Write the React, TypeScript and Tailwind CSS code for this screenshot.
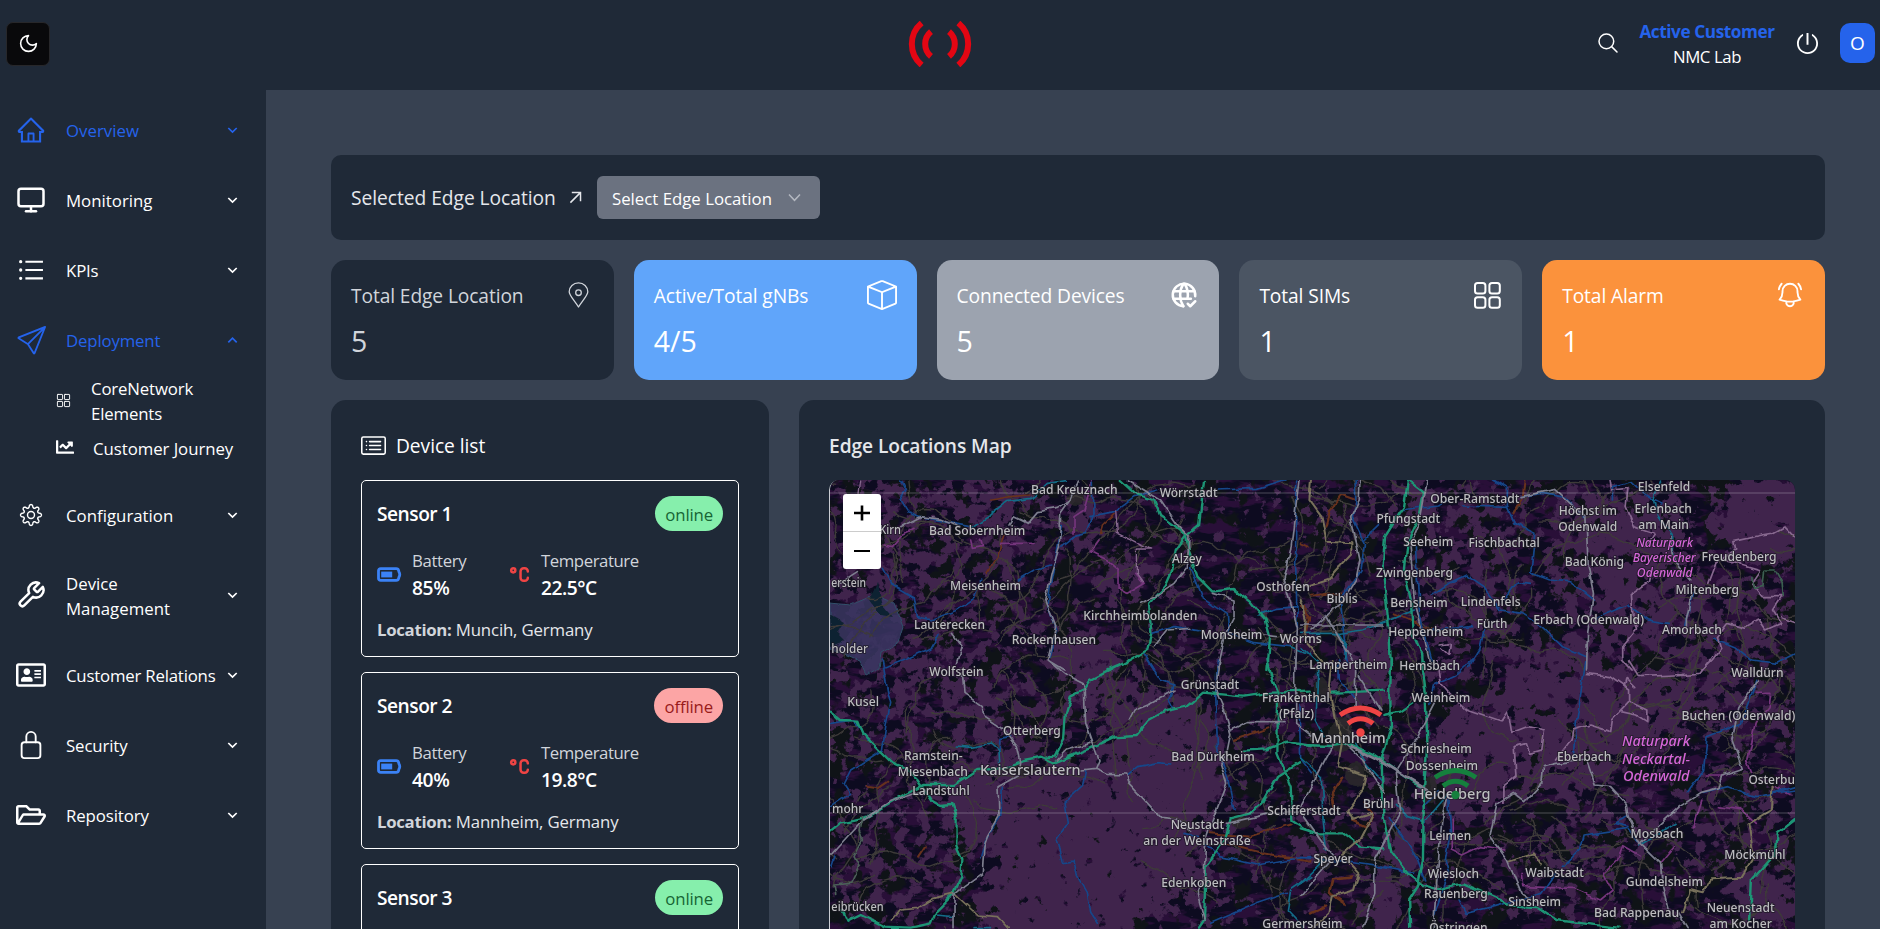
import React from "react";
import { AiOutlineHome, AiOutlineUnorderedList, AiOutlinePoweroff } from "react-icons/ai";
import { FiMonitor } from "react-icons/fi";
import { BsSend, BsBox, BsCardList } from "react-icons/bs";
import { LuWrench } from "react-icons/lu";
import { FaRegAddressCard, FaRegFolderOpen, FaChartLine } from "react-icons/fa";
import { IoLockClosedOutline, IoGridOutline, IoSearchOutline } from "react-icons/io5";
import { TbWorldCheck, TbTemperatureCelsius } from "react-icons/tb";
import { HiOutlineBellAlert } from "react-icons/hi2";

/* ---------- map ---------- */

type Sheet = "nw" | "ne" | "sw" | "se";

const SHEETS: Record<Sheet, { x: number; y: number; sx: number; sy: number }> = {
  nw: { x: 789.7, y: 400, sx: 1 / 3, sy: 1 / 3 },
  ne: { x: 1299.7, y: 400, sx: 540 / 1568, sy: 1 / 3 },
  sw: { x: 789.7, y: 660, sx: 1 / 3, sy: 1 / 3 },
  se: { x: 1299.7, y: 660, sx: 540 / 1568, sy: 1 / 3 },
};

const GREEN = "#1f9474";
const BLUE = "#154689";
const TEAL = "#126a86";
const RAIL = "#7d7e8e";
const LILAC = "#86678e";
const KHAKI = "#77705a";
const MAGENTA = "#74357b";
const ORANGE = "#66301f";

const ROADS: [Sheet, string, number, string[]][] = [
  ["nw", ORANGE, 5, ["M600 300 L660 290 L720 285", "M640 400 L620 470 L585 520", "M970 340 L935 375 L930 400", "M1540 620 L1555 660 L1540 700"]],
  ["ne", ORANGE, 6, ["M72 380 L85 330 L120 285 L160 300", "M650 240 L645 290 L618 340", "M0 430 L20 440", "M30 590 L120 580", "M270 640 L380 690", "M0 620 L25 650 L15 700"]],
  ["sw", ORANGE, 6, ["M230 380 L260 385 L290 365", "M1330 240 L1430 205", "M1260 520 L1380 530 L1500 490", "M1290 550 L1420 580 L1560 605", "M385 590 L405 560"]],
  ["se", ORANGE, 8, ["M120 350 L90 400 L100 450", "M150 480 L190 500 L210 460 L185 430", "M150 650 L95 655 L85 700 L130 730", "M30 760 L70 740"]],
  ["nw", MAGENTA, 5, ["M905 240 L880 330 L850 350 L850 400", "M540 420 L545 445 L575 440 L570 415", "M630 430 L730 430", "M280 435 L305 440 L340 400 L370 385", "M925 420 L900 455 L950 480 L985 510 L985 565 L1010 580 L1060 550 L1035 520"]],
  ["se", MAGENTA, 5, ["M440 480 L440 570 L470 585 L520 560 L590 570", "M640 640 L645 680 L790 685 L870 720 L905 690 L880 640 L920 600 L935 560 L985 590", "M1320 100 L1365 100 L1360 140 L1320 190 L1295 300 L1310 340", "M1370 380 L1420 400", "M1210 440 L1280 450 L1320 490", "M1180 345 L1230 345", "M1140 500 L1165 420", "M1045 610 L1085 560"]],
  ["nw", BLUE, 5, ["M330 240 L345 275 L328 300 L350 335 L390 350 L460 365 L540 380", "M905 250 L907 340 L885 400 L850 410 L812 440", "M895 350 L970 335 L1030 290 L1100 270", "M1280 270 L1400 265 L1480 240", "M680 540 L730 510 L780 495", "M275 505 L300 550 L370 590 L380 650 L420 660 L500 630 L550 595 L570 540", "M445 700 L420 745 L340 780 L280 805", "M1200 500 L1235 590 L1310 640 L1315 700 L1390 728 L1500 740", "M1085 700 L1150 680 L1225 692", "M1060 760 L1090 810", "M1410 640 L1460 625 L1520 620", "M1515 240 L1515 500 L1520 680", "M812 380 L800 450 L778 560 L772 620 L798 690 L775 770"]],
  ["ne", BLUE, 5, ["M158 240 L160 310 L150 350 L185 430 L175 510 L115 600 L125 700 L135 790", "M180 420 L230 370", "M290 330 L400 315 L430 300", "M640 290 L700 280 L770 292 L825 350", "M560 240 L600 265 L600 320 L620 370 L680 400 L668 520 L720 540 L780 545 L850 600", "M470 318 L600 322", "M380 585 L430 550 L480 525 L530 560 L580 630 L640 640 L700 680 L760 740 L830 770", "M590 600 L630 545 L668 550", "M860 655 L950 615 L1010 660 L1070 670", "M1200 715 L1260 740 L1310 780 L1380 790 L1437 760", "M380 690 L500 680", "M535 680 L520 750 L490 800", "M1138 580 L1115 680", "M333 440 L345 640 L380 780", "M905 300 L905 260 L960 245 L1000 285 L1050 310"]],
  ["sw", BLUE, 5, ["M275 0 L290 90 L300 130 L285 200 L275 270 L180 330 L160 370 L180 400 L120 440", "M120 190 L190 180 L230 240", "M625 275 L628 235 L660 230", "M885 330 L875 380 L820 430 L830 490 L797 540 L815 605 L850 600 L860 650 L890 700 L900 760 L920 790", "M1010 345 L1040 320 L1100 308 L1140 312", "M1070 0 L1110 60 L1150 75 L1135 120 L1150 150", "M1280 0 L1275 100 L1280 260 L1310 350 L1330 450", "M1245 550 L1290 590 L1400 615 L1480 600 L1560 590", "M1260 790 L1400 730 L1490 700", "M635 380 L630 470 L585 540 L568 600", "M1525 130 L1530 300 L1560 340", "M120 620 L130 590", "M1220 530 L1180 520"]],
  ["se", BLUE, 5, ["M0 592 L100 600 L240 622 L330 640", "M500 0 L450 45 L385 75 L378 130", "M828 0 L800 190 L795 290", "M1325 60 L1280 190 L1180 230 L1170 330 L1120 400", "M1165 400 L1240 380 L1320 410 L1437 390", "M260 470 L340 600 L360 660", "M760 620 L810 570 L820 525 L950 505 L980 545", "M460 720 L480 760 L560 740 L700 700 L740 640", "M110 0 L112 60 L160 120", "M430 410 L435 520 L420 600 L430 640 L390 760", "M950 470 L910 490 L950 500", "M400 395 L355 440", "M1370 400 L1437 380"]],
  ["nw", TEAL, 5, ["M540 385 L600 345 L650 305 L720 295 L770 250 L830 242", "M1405 645 L1440 630", "M1500 740 L1560 765"]],
  ["ne", TEAL, 5, ["M100 702 L180 690 L250 665 L330 630", "M1045 240 L1025 300 L1040 350 L1080 410 L1085 490", "M0 740 L50 790", "M0 700 L110 700 L135 740 L130 780"]],
  ["sw", TEAL, 5, ["M497 258 L540 262 L600 252 L625 275 L628 325", "M430 765 L490 770", "M1560 650 L1500 690 L1490 750 L1540 803", "M550 803 L600 803"]],
  ["se", TEAL, 5, ["M50 0 L45 180 L70 230", "M0 295 L60 350 L65 480 L75 570", "M160 250 L190 310 L235 360", "M275 430 L310 470 L360 485 L430 400", "M0 670 L70 600", "M1090 490 L985 555"]],
  ["nw", GREEN, 7, ["M990 240 L1040 285 L1090 300 L1108 345 L1150 375 L1185 405 L1195 450 L1220 530 L1265 575 L1330 567 L1380 605 L1425 660 L1438 710 L1430 810", "M1240 240 L1230 330 L1225 375 L1185 410 L1155 450 L1145 510 L1125 555 L1075 610 L1082 700 L1070 750 L1010 785 L950 810"]],
  ["ne", GREEN, 7, ["M312 240 L300 320 L245 410 L238 500 L258 700 L262 810", "M310 240 L358 278 L345 350 L310 430 L302 520 L320 600 L325 700 L350 760 L352 810"]],
  ["sw", GREEN, 7, ["M120 155 L150 180 L200 182 L215 220 L255 260 L300 305 L345 325 L380 360 L420 420 L445 435 L485 432 L498 470 L497 560 L515 600 L512 650 L490 700 L435 755 L420 790 L360 803 L280 800 L210 765 L170 785 L155 750", "M120 512 L150 488 L230 470 L340 405 L400 375 L490 375 L560 330 L640 325 L700 300 L750 290 L790 308 L900 265 L970 232 L1035 228 L1075 180 L1120 155 L1190 140 L1240 98 L1360 110 L1440 98 L1560 95", "M1015 0 L950 35 L900 60 L880 90 L840 110 L825 160 L820 240 L795 290 L770 292", "M1430 0 L1445 60 L1462 100 L1460 280 L1480 330 L1500 380 L1505 480 L1560 515", "M1355 272 L1430 268 L1490 245 L1560 258", "M1525 310 L1460 350 L1415 430 L1380 460 L1320 475 L1305 530 L1280 570 L1245 620 L1240 780 L1225 803"]],
  ["se", GREEN, 7, ["M262 0 L260 100 L262 200 L235 300 L240 470 L260 570 L310 640 L355 675 L400 688 L470 670 L560 710 L620 740 L690 745 L740 780 L920 803", "M352 0 L362 90 L368 250 L358 380 L355 600 L340 680 L315 720 L318 803", "M90 98 L245 92", "M0 255 L90 258 L140 250 L210 285 L330 370 L370 390", "M240 165 L290 155 L325 130", "M0 505 L50 520 L120 520 L170 560 L240 565", "M1437 478 L1385 520 L1380 580 L1310 660 L1305 780"]],
  ["ne", KHAKI, 6, ["M30 240 L25 300 L60 350 L75 425 L150 430 L150 460 L105 510 L80 540 L20 560", "M0 600 L15 660 L10 720 L70 790"]],
  ["sw", KHAKI, 5, ["M305 780 L330 750 L380 745 L430 715 L490 700 L560 765 L620 770 L650 803"]],
  ["se", KHAKI, 6, ["M90 0 L82 80 L100 180 L120 250 L108 320 L188 345 L180 390 L135 450 L150 480 L210 460 L170 540 L120 585 L168 640 L155 690 L90 710 L80 760 L35 803", "M1370 380 L1365 450 L1300 490 L1315 590 L1280 650 L1190 655 L1170 700 L1130 690 L1110 760", "M605 605 L680 580 L700 610"]],
  ["nw", RAIL, 5, ["M130 560 L200 515", "M330 380 L390 350 L450 358 L510 382", "M655 375 L670 350 L710 370 L740 335 L800 325 L838 300 L860 240", "M838 300 L810 340 L806 440 L782 520 L765 600 L795 680 L770 780 L820 810", "M1010 240 L1110 300 L1165 380 L1195 410 L1190 500 L1150 550 L1090 590 L1050 610", "M1265 580 L1330 600 L1330 650 L1300 710 L1280 800", "M1525 240 L1500 450 L1480 540 L1520 680 L1515 810", "M485 700 L515 740 L500 790", "M1420 705 L1460 710", "M1090 740 L1130 690 L1200 685"]],
  ["ne", RAIL, 5, ["M172 240 L170 300 L145 350 L172 480 L160 540 L125 600 L30 690", "M75 645 L150 780", "M368 240 L345 370 L318 440 L330 600 L360 720 L375 790", "M640 290 L740 268 L828 350 L835 500 L850 580 L833 700 L830 810", "M0 675 L240 675", "M1075 410 L1085 490 L1130 540", "M1135 580 L1120 660 L1120 680"]],
  ["sw", RAIL, 5, ["M770 0 L830 50 L880 75 L885 190 L925 300 L915 325 L870 330", "M915 325 L950 340 L1005 342 L1010 365 L1080 440 L1110 475 L1160 480 L1200 510", "M515 40 L520 100 L575 140 L580 170 L640 210 L680 260 L690 305 L685 345 L622 380 L625 470 L590 530 L580 560 L575 640 L520 680 L490 705 L490 803", "M120 585 L215 480 L300 425 L400 390", "M1285 0 L1275 90 L1300 150 L1320 220 L1310 270 L1290 310 L1308 370 L1270 470 L1245 540 L1240 650 L1220 700 L1240 780", "M1015 180 L1030 150 L1080 130 L1150 90", "M1515 0 L1515 190 L1560 225", "M1310 490 L1440 460 L1560 450", "M1320 210 L1370 185 L1480 185", "M800 300 L830 270 L900 250"]],
  ["se", RAIL, 5, ["M160 0 L158 150", "M130 250 L180 300 L245 400", "M95 255 L0 440", "M400 110 L340 230 L275 340 L288 460 L215 600 L215 700 L180 803", "M430 400 L410 480 L400 600 L385 803", "M570 430 L555 500 L550 530 L600 600 L640 700 L700 740", "M0 705 L95 590 L0 455", "M575 430 L620 400 L650 425 L700 370 L705 320 L740 310 L830 300 L855 375 L900 380 L945 430 L950 470 L985 550 L1045 610 L1050 680 L1070 760", "M985 550 L1100 440 L1160 400 L1215 385 L1225 345 L1285 325 L1255 240 L1275 140 L1330 60", "M1100 760 L1125 803", "M170 50 L230 150"]],
  ["se", RAIL, 8, ["M145 258 L240 310 L370 390"]],
  ["nw", LILAC, 4, ["M975 330 L980 400 L1040 430 L1080 450 L1040 450 L1040 520 L1058 545", "M210 240 L205 280"]],
  ["ne", LILAC, 5, ["M895 240 L900 270 L950 265 L945 320 L970 380 L1025 400 L1000 440 M1015 520 L1010 545 L960 580 L965 650 L975 690 L935 740 L935 775 L965 810", "M1437 415 L1405 380 L1370 400 L1340 405 L1255 425 L1260 450 L1205 495 L1185 550", "M1230 480 L1335 512 L1310 550 L1340 590 L1395 590 L1370 630 L1395 670 L1350 690 L1330 660 L1290 685 L1240 670 L1210 710 L1220 745 L1195 780 L1165 810", "M1395 650 L1437 665", "M405 735 L435 730 L430 765 L410 745"]],
  ["se", LILAC, 5, ["M395 0 L405 70 L430 100 L480 150 L580 185 L600 155 L610 220 L660 200 L708 210 L700 270 L665 280 L655 250 L620 260 L625 350 L590 380 L590 430", "M740 300 L785 240 L790 210 L840 195 L900 215 L905 180 L955 125 L955 90 L900 50 L830 40", "M955 0 L985 50 L1080 45 L1160 40 L1190 0", "M955 125 L1005 150 L1005 185 L975 165 L930 155", "M940 80 L945 55 L970 80"]],
  ["sw", "#4b5f58", 5, ["M215 470 L205 510 L215 540 L190 590 L205 620 L180 670 L130 675 L135 700"]],
  ["ne", "#3b5e50", 5, ["M1310 530 L1315 565 L1345 560 L1350 510 L1375 510 L1395 550 L1398 590"]],
];

/* [sheet, text, left, right, baseline, font size] */
const LABELS: [Sheet, string, number, number, number, number][] = [
  ["nw", "Bad Kreuznach", 721, 981, 281, 12.5],
  ["nw", "Wörrstadt", 1107, 1281, 290, 12.5],
  ["nw", "Kirn", 266, 331, 402, 12.5],
  ["nw", "Bad Sobernheim", 415, 704, 406, 12.5],
  ["nw", "Alzey", 1144, 1233, 489, 12.5],
  ["nw", "erstein", 122, 226, 562, 12.5],
  ["nw", "Meisenheim", 478, 691, 569, 12.5],
  ["nw", "Osthofen", 1397, 1557, 573, 12.5],
  ["nw", "Kirchheimbolanden", 878, 1220, 659, 12.5],
  ["nw", "Lauterecken", 370, 583, 688, 12.5],
  ["nw", "Rockenhausen", 663, 916, 733, 12.5],
  ["nw", "Monsheim", 1230, 1415, 717, 12.5],
  ["nw", "Worms", 1467, 1593, 729, 12.5],
  ["nw", "holder", 122, 232, 759, 12.5],
  ["ne", "Ober-Ramstadt", 376, 635, 308, 12.5],
  ["ne", "Pfungstadt", 220, 405, 368, 12.5],
  ["ne", "Seeheim", 298, 443, 437, 12.5],
  ["ne", "Fischbachtal", 487, 694, 442, 12.5],
  ["ne", "Höchst im", 749, 918, 346, 12.5],
  ["ne", "Odenwald", 748, 919, 393, 12.5],
  ["ne", "Elsenfeld", 979, 1131, 272, 12.5],
  ["ne", "Erlenbach", 969, 1136, 340, 12.5],
  ["ne", "am Main", 980, 1127, 388, 12.5],
  ["ne", "Bad König", 767, 939, 497, 12.5],
  ["ne", "Freudenberg", 1164, 1382, 482, 12.5],
  ["ne", "Miltenberg", 1088, 1273, 581, 12.5],
  ["ne", "Zwingenberg", 219, 442, 532, 12.5],
  ["ne", "Biblis", 75, 165, 609, 12.5],
  ["ne", "Bensheim", 260, 427, 622, 12.5],
  ["ne", "Lindenfels", 465, 639, 618, 12.5],
  ["ne", "Heppenheim", 254, 472, 709, 12.5],
  ["ne", "Fürth", 511, 600, 684, 12.5],
  ["ne", "Erbach (Odenwald)", 675, 997, 673, 12.5],
  ["ne", "Amorbach", 1049, 1223, 703, 12.5],
  ["sw", "Wolfstein", 416, 579, 49, 12.5],
  ["sw", "Kusel", 170, 265, 139, 12.5],
  ["sw", "Otterberg", 637, 810, 224, 12.5],
  ["sw", "Ramstein-", 340, 516, 301, 12.5],
  ["sw", "Miesenbach", 321, 532, 348, 12.5],
  ["sw", "Kaiserslautern", 568, 870, 344, 14.5],
  ["sw", "Landstuhl", 365, 537, 405, 12.5],
  ["sw", "mohr", 124, 218, 460, 12.5],
  ["sw", "Grünstadt", 1170, 1345, 88, 12.5],
  ["sw", "Frankenthal", 1414, 1617, 126, 12.5],
  ["sw", "(Pfalz)", 1465, 1570, 174, 12.5],
  ["sw", "Bad Dürkheim", 1142, 1392, 302, 12.5],
  ["sw", "Schifferstadt", 1430, 1650, 464, 12.5],
  ["sw", "Neustadt", 1140, 1300, 507, 12.5],
  ["sw", "an der Weinstraße", 1058, 1380, 555, 12.5],
  ["sw", "Edenkoben", 1112, 1307, 682, 12.5],
  ["sw", "eibrücken", 122, 279, 752, 12.5],
  ["sw", "Germersheim", 1415, 1656, 805, 12.5],
  ["se", "Lampertheim", 25, 252, 27, 12.5],
  ["se", "Hemsbach", 286, 463, 31, 12.5],
  ["se", "Weinheim", 322, 493, 126, 12.5],
  ["se", "Walldürn", 1250, 1402, 50, 12.5],
  ["se", "Buchen (Odenwald)", 1106, 1436, 180, 12.5],
  ["se", "Mannheim", 30, 247, 248, 14.5],
  ["se", "Schriesheim", 290, 497, 278, 12.5],
  ["se", "Dossenheim", 305, 515, 331, 12.5],
  ["se", "Heidelberg", 328, 551, 417, 14.5],
  ["se", "Eberbach", 744, 902, 303, 12.5],
  ["se", "Osterbu", 1300, 1435, 372, 12.5],
  ["se", "Brühl", 181, 270, 445, 12.5],
  ["se", "Leimen", 373, 495, 541, 12.5],
  ["se", "Mosbach", 958, 1111, 535, 12.5],
  ["se", "Speyer", 37, 151, 610, 12.5],
  ["se", "Wiesloch", 369, 518, 654, 12.5],
  ["se", "Waibstadt", 652, 822, 650, 12.5],
  ["se", "Möckmühl", 1230, 1408, 597, 12.5],
  ["se", "Gundelsheim", 944, 1168, 678, 12.5],
  ["se", "Rauenberg", 358, 543, 713, 12.5],
  ["se", "Sinsheim", 603, 756, 738, 12.5],
  ["se", "Bad Rappenau", 852, 1099, 772, 12.5],
  ["se", "Neuenstadt", 1179, 1376, 755, 12.5],
  ["se", "am Kocher", 1187, 1368, 803, 12.5],
  ["se", "Östringen", 373, 543, 815, 12.5],
];

const PARKS: [Sheet, string, number, number, number, number][] = [
  ["ne", "Naturpark", 974, 1139, 442, 12.5],
  ["ne", "Bayerischer", 964, 1147, 486, 12.5],
  ["ne", "Odenwald", 976, 1138, 530, 12.5],
  ["se", "Naturpark", 933, 1131, 258, 15],
  ["se", "Neckartal-", 933, 1131, 312, 15],
  ["se", "Odenwald", 936, 1129, 364, 15],
];

/* Forest density, one blob each: cx, cy, rx, ry, opacity. */
const FOREST: [number, number, number, number, number][] = [
  [870, 540, 80, 80, 0.3], [985, 498, 50, 25, 0.55], [1010, 545, 50, 25, 0.45], [940, 620, 100, 80, 0.25],
  [1080, 520, 18, 22, 0.9], [1125, 575, 35, 25, 0.55], [1085, 655, 35, 25, 0.95], [900, 710, 100, 60, 0.3],
  [1010, 720, 60, 40, 0.35], [1095, 840, 95, 85, 1], [1060, 905, 85, 50, 1], [1165, 765, 58, 70, 1],
  [1110, 700, 45, 25, 0.65], [1000, 800, 60, 50, 0.85], [890, 860, 70, 70, 0.3], [1180, 722, 30, 22, 0.7],
  [1415, 495, 16, 20, 0.9], [1368, 655, 22, 30, 1], [1330, 520, 30, 20, 0.25],
  [1470, 560, 50, 70, 0.42], [1480, 640, 50, 40, 0.3], [1590, 580, 45, 90, 0.45], [1650, 570, 45, 80, 0.6],
  [1765, 520, 50, 45, 1], [1730, 620, 60, 40, 0.5], [1560, 720, 75, 75, 0.75], [1470, 760, 38, 60, 0.9],
  [1640, 710, 50, 45, 0.75], [1680, 820, 50, 40, 0.2], [1600, 830, 50, 40, 0.3], [1750, 830, 55, 60, 0.25],
  [1400, 845, 18, 36, 1], [1382, 905, 16, 34, 1], [1540, 880, 80, 50, 0.2], [1765, 900, 35, 30, 0.95],
  [1750, 710, 50, 50, 0.35], [1308, 850, 20, 12, 0.9], [1700, 680, 30, 40, 0.5], [1500, 540, 30, 20, 0.2],
  [1170, 870, 45, 40, 0.65], [1370, 690, 25, 15, 0.8], [1600, 520, 60, 30, 0.4],
];

/* Deterministic tangle of country lanes. */
function lanes(): string[] {
  let seed = 11;
  const rnd = () => {
    seed = (seed * 16807) % 2147483647;
    return seed / 2147483647;
  };
  const out: string[] = [];
  for (let i = 0; i < 230; i++) {
    let x = 829 + rnd() * 966;
    let y = 480 + rnd() * 449;
    if (x > 1010 && x < 1200 && y > 790 && rnd() < 0.8) continue;
    let a = rnd() * Math.PI * 2;
    let d = `M${x.toFixed(1)} ${y.toFixed(1)}`;
    const n = 6 + Math.floor(rnd() * 12);
    for (let k = 0; k < n; k++) {
      a += (rnd() - 0.5) * 1.1;
      x += Math.cos(a) * 8;
      y += Math.sin(a) * 8;
      d += `L${x.toFixed(1)} ${y.toFixed(1)}`;
    }
    out.push(d);
  }
  return out;
}
const LANES = lanes();

function place([sheet, text, l, r, b, size]: [Sheet, string, number, number, number, number]) {
  const s = SHEETS[sheet];
  return { text, size, x: s.x + l * s.sx, w: (r - l) * s.sx, y: s.y + b * s.sy };
}

function Wifi({ x, y, color }: { x: number; y: number; color: string }) {
  return (
    <g transform={`translate(${x} ${y})`} fill="none" stroke={color} strokeWidth="5">
      <path d="M-20.5 -17.5 Q0 -31.5 20.5 -17.5" />
      <path d="M-12.5 -9 Q0 -18.5 12.5 -9" />
      <circle r="4.2" fill={color} stroke="none" />
    </g>
  );
}

function MapView() {
  return (
    <svg className="block h-full w-full" viewBox="829 480 966 449" preserveAspectRatio="xMinYMin slice">
      <defs>
        <filter id="forest" x="800" y="450" width="1020" height="500" filterUnits="userSpaceOnUse" colorInterpolationFilters="sRGB">
          <feGaussianBlur in="SourceGraphic" stdDeviation="8" result="density" />
          <feTurbulence type="fractalNoise" baseFrequency="0.085" numOctaves="5" seed="7" result="noise" />
          <feColorMatrix in="noise" type="matrix" values="0 0 0 0 0.25  0 0 0 0 0.14  0 0 0 0 0.3  0 0 0 1 0" result="grain" />
          <feComposite in="density" in2="grain" operator="arithmetic" k1="0" k2="0.5" k3="1" k4="-0.25" result="sum" />
          <feColorMatrix in="sum" type="matrix" values="0 0 0 0 0.25  0 0 0 0 0.14  0 0 0 0 0.3  0 0 0 13 -6.2" />
        </filter>
        <filter id="fields" x="800" y="450" width="1020" height="500" filterUnits="userSpaceOnUse" colorInterpolationFilters="sRGB">
          <feTurbulence type="fractalNoise" baseFrequency="0.03 0.09" numOctaves="4" seed="3" />
          <feColorMatrix type="matrix" values="0 0 0 0 0.16  0 0 0 0 0.06  0 0 0 0 0.22  0 0 0 9 -4.4" />
        </filter>
        <filter id="scrub" x="800" y="450" width="1020" height="500" filterUnits="userSpaceOnUse" colorInterpolationFilters="sRGB">
          <feTurbulence type="fractalNoise" baseFrequency="0.04" numOctaves="5" seed="21" />
          <feColorMatrix type="matrix" values="0 0 0 0 0.06  0 0 0 0 0.075  0 0 0 0 0.09  0 0 0 12 -6.4" />
        </filter>
        <filter id="wobble" x="800" y="450" width="1020" height="500" filterUnits="userSpaceOnUse">
          <feTurbulence type="fractalNoise" baseFrequency="0.07" numOctaves="2" seed="5" />
          <feDisplacementMap in="SourceGraphic" scale="6" xChannelSelector="R" yChannelSelector="G" />
        </filter>
      </defs>
      <rect x="829" y="480" width="966" height="449" fill="#0d0b20" />
      <rect x="829" y="480" width="966" height="449" filter="url(#fields)" />
      <rect x="829" y="480" width="966" height="449" filter="url(#scrub)" />
      <g filter="url(#forest)">
        <rect x="829" y="480" width="966" height="449" fill="#000" opacity="0.22" />
        {FOREST.map(([cx, cy, rx, ry, o], i) => (
          <ellipse key={i} cx={cx} cy={cy} rx={rx} ry={ry} fill="#000" opacity={o} />
        ))}
      </g>
      <path
        d="M829 603 L850 605 L873 595 L893 603 L902 627 L897 643 L880 653 L878 668 L865 675 L858 660 L829 648 Z"
        fill="#3a3560"
        fillOpacity="0.85"
        stroke="#31506a"
        filter="url(#wobble)"
      />
      <path
        d="M829 615 L842 622 L836 632 L844 640 L829 646 Z M868 600 L876 582 L882 606 L892 618 L880 616 Z"
        fill="#0e2230"
        filter="url(#wobble)"
      />
      <g fill="#2b2b2b" opacity="0.85" filter="url(#wobble)">
        <circle cx="1075" cy="498" r="8" />
        <ellipse cx="1340" cy="735" rx="12" ry="18" />
        <ellipse cx="1355" cy="775" rx="10" ry="12" />
        <ellipse cx="1428" cy="790" rx="8" ry="14" />
        <ellipse cx="1020" cy="770" rx="14" ry="6" />
        <ellipse cx="1322" cy="862" rx="8" ry="9" />
        <ellipse cx="1320" cy="690" rx="7" ry="14" />
        <ellipse cx="1240" cy="822" rx="10" ry="6" />
      </g>
      <g filter="url(#wobble)" fill="none" strokeLinejoin="round" strokeLinecap="round">
        <g stroke="#3d3a39" strokeWidth="1.4">
          {LANES.map((d, i) => (
            <path key={i} d={d} />
          ))}
        </g>
        {ROADS.map(([sheet, color, width, paths], i) => {
          const s = SHEETS[sheet];
          return (
            <g key={i} transform={`translate(${s.x} ${s.y}) scale(${s.sx} ${s.sy})`} stroke={color} strokeWidth={width}>
              {paths.map((d) => (
                <path key={d} d={d} />
              ))}
            </g>
          );
        })}
      </g>
      <path d="M829 493 H1795 M829 813 H1795" stroke="#ffffff" strokeOpacity="0.13" strokeWidth="2" />
      <g
        fontFamily="'Noto Sans', sans-serif"
        fontWeight="500"
        stroke="#1c1a24"
        strokeOpacity="0.75"
        strokeWidth="2"
        paintOrder="stroke"
        strokeLinejoin="round"
      >
        <g fill="#bdbdc0">
          {LABELS.map((l, i) => {
            const p = place(l);
            return (
              <text key={i} x={p.x} y={p.y} fontSize={p.size} textLength={p.w} lengthAdjust="spacingAndGlyphs">
                {p.text}
              </text>
            );
          })}
        </g>
        <g fill="#d566d8" fontStyle="italic">
          {PARKS.map((l, i) => {
            const p = place(l);
            return (
              <text key={i} x={p.x} y={p.y} fontSize={p.size} textLength={p.w} lengthAdjust="spacingAndGlyphs">
                {p.text}
              </text>
            );
          })}
        </g>
      </g>
      <Wifi x={1359.5} y={732.5} color="#ef4444" />
      <Wifi x={1454.5} y={795} color="#15803d" />
    </svg>
  );
}

/* ---------- icons ---------- */

function gearOutline(): string {
  let d = "";
  for (let i = 0; i < 160; i++) {
    const t = (i / 160) * Math.PI * 2;
    const c = Math.cos(8 * t);
    const r = 8.9 + 1.55 * Math.sign(c) * Math.pow(Math.abs(c), 0.6);
    d += `${i ? "L" : "M"}${(12 + r * Math.sin(t)).toFixed(2)} ${(12 - r * Math.cos(t)).toFixed(2)}`;
  }
  return d + "Z";
}
const GEAR = gearOutline();

function GearIcon() {
  return (
    <svg className="size-[24px]" viewBox="0 0 24 24" fill="none" stroke="currentColor" strokeWidth="1.4" strokeLinejoin="round">
      <path d={GEAR} />
      <circle cx="12" cy="12" r="3.5" />
    </svg>
  );
}

function PinIcon() {
  return (
    <svg className="mr-[5px] h-[26px] w-[21px]" viewBox="0 0 21 26" fill="none" stroke="currentColor" strokeWidth="1.3" strokeLinejoin="round">
      <path d="M10.5 25 C7 19 1.2 13.5 1.2 9.7 A9.3 8.9 0 0 1 19.8 9.7 C19.8 13.5 14 19 10.5 25 Z" />
      <circle cx="10.5" cy="10.7" r="2.8" />
    </svg>
  );
}

function SquaresIcon() {
  return (
    <svg className="mr-[1px] size-[27px]" viewBox="0 0 27 27" fill="none" stroke="currentColor" strokeWidth="2">
      <rect x="1" y="1" width="10.4" height="10.6" rx="2.6" />
      <rect x="15.4" y="1" width="10.4" height="10.6" rx="2.6" />
      <rect x="1" y="15.2" width="10.4" height="10.6" rx="2.6" />
      <rect x="15.4" y="15.2" width="10.4" height="10.6" rx="2.6" />
    </svg>
  );
}

function BatteryIcon() {
  return (
    <svg className="h-[15px] w-[25px]" viewBox="0 0 25 15" fill="none" stroke="#3b82f6" strokeWidth="2.8">
      <path d="M3.7 1.6 H19.2 Q21.3 1.6 21.6 3.4 L21.9 4.8 Q23.6 7.5 21.9 10.2 L21.6 11.6 Q21.3 13.4 19.2 13.4 H3.7 Q1.5 13.4 1.5 11.2 V3.8 Q1.5 1.6 3.7 1.6 Z" />
      <rect x="4.2" y="4.6" width="11" height="5.8" fill="#3b82f6" stroke="none" />
    </svg>
  );
}

/* ---------- shell ---------- */

function Logo() {
  return (
    <svg className="h-[46px] w-[64px]" viewBox="0 0 192 138" fill="none" stroke="#e30613" strokeWidth="18">
      <path d="M41 6 A82 82 0 0 0 41 132" />
      <path d="M69 32 A48 48 0 0 0 69 106" />
      <path d="M123 32 A48 48 0 0 1 123 106" />
      <path d="M151 6 A82 82 0 0 1 151 132" />
    </svg>
  );
}

function Header() {
  return (
    <header className="flex h-[90px] shrink-0 items-center bg-[#1f2937] pr-[5px] pl-[6px]">
      <div className="flex flex-1 pb-[3px]">
        <button className="flex size-[44px] items-center justify-center rounded-[7px] border border-[#27272a] bg-[#09090b]">
          <svg className="size-[21px]" viewBox="0 0 24 24" fill="none" stroke="#fff" strokeWidth="1.8" strokeLinejoin="round">
            <path d="M12 3a6 6 0 0 0 9 9 9 9 0 1 1-9-9Z" />
          </svg>
        </button>
      </div>
      <div className="pr-[1px] pb-[3px]">
        <Logo />
      </div>
      <div className="flex flex-1 items-center justify-end pb-[4px] text-white">
        <IoSearchOutline className="size-[24px]" />
        <div className="ml-[18px] flex w-[138px] flex-col items-center pt-[2px] leading-[25px] whitespace-nowrap">
          <span className="text-[17.2px] font-bold tracking-[-0.42px] text-[#2563eb]">Active Customer</span>
          <span className="text-[16.8px] tracking-[-0.4px]">NMC Lab</span>
        </div>
        <AiOutlinePoweroff className="ml-[19px] size-[25px]" />
        <div className="ml-[20px] flex h-[40px] w-[35px] items-center justify-center rounded-[10px] bg-[#2563eb] text-[19px]">O</div>
      </div>
    </header>
  );
}

function Chevron({ up }: { up?: boolean }) {
  return (
    <svg className="h-[9px] w-[11px] shrink-0" viewBox="0 0 11 9" fill="none" stroke="currentColor" strokeWidth="1.7">
      <path d={up ? "M1.3 6.3 L5.5 2.2 L9.7 6.3" : "M1.3 2 L5.5 6.1 L9.7 2"} />
    </svg>
  );
}

function NavItem({
  icon,
  label,
  active,
  open,
  tall,
  tracking = "tracking-[0.02px]",
}: {
  icon: React.ReactNode;
  label: string;
  active?: boolean;
  open?: boolean;
  tall?: boolean;
  tracking?: string;
}) {
  return (
    <div className={`flex shrink-0 items-center pr-[28px] pl-[16px] ${tall ? "h-[90px]" : "h-[70px]"} ${active ? "text-[#2563eb]" : "text-white"}`}>
      <span className="flex w-[30px] justify-center text-[30px]">{icon}</span>
      <span className={`ml-[20px] flex-1 text-[16.8px] leading-[25px] ${tracking} ${tall ? "pt-[1px] pr-[30px]" : "whitespace-nowrap"}`}>{label}</span>
      <Chevron up={open} />
    </div>
  );
}

function Sidebar() {
  return (
    <nav className="flex w-[266px] shrink-0 flex-col bg-[#1f2937] pt-[5px]">
      <NavItem active label="Overview" icon={<AiOutlineHome />} />
      <NavItem label="Monitoring" icon={<FiMonitor />} />
      <NavItem label="KPIs" icon={<AiOutlineUnorderedList />} tracking="tracking-[-0.15px]" />
      <NavItem active open label="Deployment" icon={<BsSend className="size-[29px]" />} tracking="tracking-[-0.15px]" />
      <div className="flex h-[105px] shrink-0 flex-col gap-[10px] pt-[1px] text-[16.8px] leading-[25px] tracking-[-0.05px] text-white">
        <div className="flex items-center pl-[56px]">
          <IoGridOutline className="mb-[2px] size-[15px]" />
          <span className="ml-[20px] w-[130px] tracking-[-0.15px]">CoreNetwork Elements</span>
        </div>
        <div className="flex items-center pl-[56px]">
          <FaChartLine className="mb-[3px] size-[18px]" />
          <span className="ml-[19px] whitespace-nowrap">Customer Journey</span>
        </div>
      </div>
      <NavItem label="Configuration" icon={<GearIcon />} />
      <NavItem tall label="Device Management" icon={<LuWrench />} />
      <NavItem label="Customer Relations" icon={<FaRegAddressCard />} tracking="tracking-[-0.2px]" />
      <NavItem label="Security" icon={<IoLockClosedOutline />} tracking="tracking-[-0.12px]" />
      <NavItem label="Repository" icon={<FaRegFolderOpen />} tracking="tracking-[-0.1px]" />
    </nav>
  );
}

function Stat({ label, value, icon, tone }: { label: string; value: string; icon: React.ReactNode; tone: string }) {
  return (
    <div className={`flex h-[120px] flex-1 flex-col rounded-[15px] px-[20px] pt-[20px] ${tone}`}>
      <div className="flex h-[30px] items-center justify-between">
        <span className="pt-[2px] text-[19.2px] tracking-[-0.1px]">{label}</span>
        {icon}
      </div>
      <span className="mt-[13px] text-[28.5px] leading-[36px]">{value}</span>
    </div>
  );
}

function Sensor({ name, online, battery, temp, place: where }: { name: string; online: boolean; battery: string; temp: string; place: string }) {
  return (
    <div className="flex h-[177px] shrink-0 flex-col rounded-[5px] border border-white px-[15px] pt-[15px] text-white">
      <div className="flex h-[35px] items-center justify-between">
        <span className="pt-[2px] text-[19.2px] font-semibold tracking-[-0.5px]">{name}</span>
        <span
          className={`flex h-[35px] items-center rounded-full px-[10px] pt-[2px] text-[16.8px] tracking-[-0.15px] ${online ? "bg-[#86efac] text-[#166534]" : "bg-[#fca5a5] text-[#991b1b]"}`}
        >
          {online ? "online" : "offline"}
        </span>
      </div>
      <div className="mt-[15px] flex">
        <div className="flex w-[130px] items-center gap-[10px]">
          <BatteryIcon />
          <div className="flex flex-col pt-[2px]">
            <span className="text-[16.8px] leading-[26px] tracking-[-0.35px] text-[#d1d5db]">Battery</span>
            <span className="text-[19.2px] leading-[28px] font-semibold tracking-[-0.4px]">{battery}</span>
          </div>
        </div>
        <div className="flex items-center gap-[9px]">
          <TbTemperatureCelsius className="size-[25px] stroke-[2.4] text-[#ef4444]" />
          <div className="flex flex-col pt-[2px]">
            <span className="text-[16.8px] leading-[26px] tracking-[-0.45px] text-[#d1d5db]">Temperature</span>
            <span className="text-[19.2px] leading-[28px] font-semibold tracking-[-0.5px]">{temp}</span>
          </div>
        </div>
      </div>
      <p className="mt-[15px] text-[16.8px] leading-[25px] tracking-[-0.15px] text-[#e5e7eb]">
        <span className="font-bold tracking-[-0.3px] text-[#d1d5db]">Location:</span> {where}
      </p>
    </div>
  );
}

export default function App() {
  return (
    <div className="flex h-[929px] w-full flex-col overflow-hidden bg-[#374151] font-['Open_Sans','Noto_Sans',sans-serif]">
      <Header />
      <div className="flex min-h-0 flex-1">
        <Sidebar />
        <main className="flex min-w-0 flex-1 flex-col gap-[20px] overflow-hidden pt-[65px] pr-[55px] pl-[65px]">
          <section className="flex h-[85px] shrink-0 items-center rounded-[10px] bg-[#1f2937] px-[20px] text-[#e5e7eb]">
            <span className="w-[205px] pt-[2px] text-[19.2px] tracking-[-0.03px] whitespace-nowrap">Selected Edge Location</span>
            <svg className="ml-[13px] size-[13px]" viewBox="0 0 14 14" fill="none" stroke="currentColor" strokeWidth="1.6">
              <path d="M1.5 12.5 L12 2 M3 1.6 H12.4 V11" />
            </svg>
            <button className="ml-[15px] flex h-[43px] w-[223px] items-center justify-between rounded-[6px] bg-[#6b7280] pr-[19px] pl-[15px] text-[16.8px] text-white">
              <span className="pt-[2px]">Select Edge Location</span>
              <svg className="h-[9px] w-[13px]" viewBox="0 0 13 9" fill="none" stroke="#b4b8c0" strokeWidth="1.5">
                <path d="M1 1.5 L6.5 7.3 L12 1.5" />
              </svg>
            </button>
          </section>
          <section className="flex shrink-0 gap-[20px]">
            <Stat label="Total Edge Location" value="5" tone="bg-[#1f2937] text-[#d1d5db]" icon={<PinIcon />} />
            <Stat label="Active/Total gNBs" value="4/5" tone="bg-[#60a5fa] text-white" icon={<BsBox className="size-[30px]" />} />
            <Stat label="Connected Devices" value="5" tone="bg-[#9ca3af] text-white" icon={<TbWorldCheck className="size-[30px]" />} />
            <Stat label="Total SIMs" value="1" tone="bg-[#4b5563] text-white" icon={<SquaresIcon />} />
            <Stat label="Total Alarm" value="1" tone="bg-[#fb923c] text-white" icon={<HiOutlineBellAlert className="size-[30px]" />} />
          </section>
          <section className="flex min-h-0 flex-1 gap-[30px]">
            <div className="flex w-[438px] shrink-0 flex-col overflow-hidden rounded-t-[15px] bg-[#1f2937] px-[30px] pt-[30px]">
              <div className="flex h-[30px] shrink-0 items-center gap-[10px] text-white">
                <BsCardList className="size-[25px]" />
                <span className="pt-[2px] text-[19.2px] tracking-[-0.05px]">Device list</span>
              </div>
              <div className="mt-[20px] flex flex-col gap-[15px]">
                <Sensor name="Sensor 1" online battery="85%" temp="22.5°C" place="Muncih, Germany" />
                <Sensor name="Sensor 2" online={false} battery="40%" temp="19.8°C" place="Mannheim, Germany" />
                <Sensor name="Sensor 3" online battery="60%" temp="21.0°C" place="Heidelberg, Germany" />
              </div>
            </div>
            <div className="flex min-w-0 flex-1 flex-col overflow-hidden rounded-t-[15px] bg-[#1f2937] px-[30px] pt-[30px]">
              <h2 className="h-[30px] shrink-0 text-[19.2px] leading-[32px] font-semibold tracking-[-0.08px] text-[#e5e7eb]">Edge Locations Map</h2>
              <div className="relative mt-[20px] min-h-0 flex-1 overflow-hidden rounded-t-[10px] border-l border-[#c9ccd2]">
                <MapView />
                <div className="absolute top-[14px] left-[13px] flex w-[38px] flex-col overflow-hidden rounded-[3px] bg-white">
                  <div className="flex h-[38px] items-center justify-center border-b border-[#cccccc]">
                    <svg className="size-[18px]" viewBox="0 0 18 18" stroke="#000" strokeWidth="2.6">
                      <path d="M1 9 H17 M9 1.5 V16.5" />
                    </svg>
                  </div>
                  <div className="flex h-[37px] items-center justify-center">
                    <svg className="size-[18px]" viewBox="0 0 18 18" stroke="#000" strokeWidth="2">
                      <path d="M1 9 H17" />
                    </svg>
                  </div>
                </div>
              </div>
            </div>
          </section>
        </main>
      </div>
    </div>
  );
}
